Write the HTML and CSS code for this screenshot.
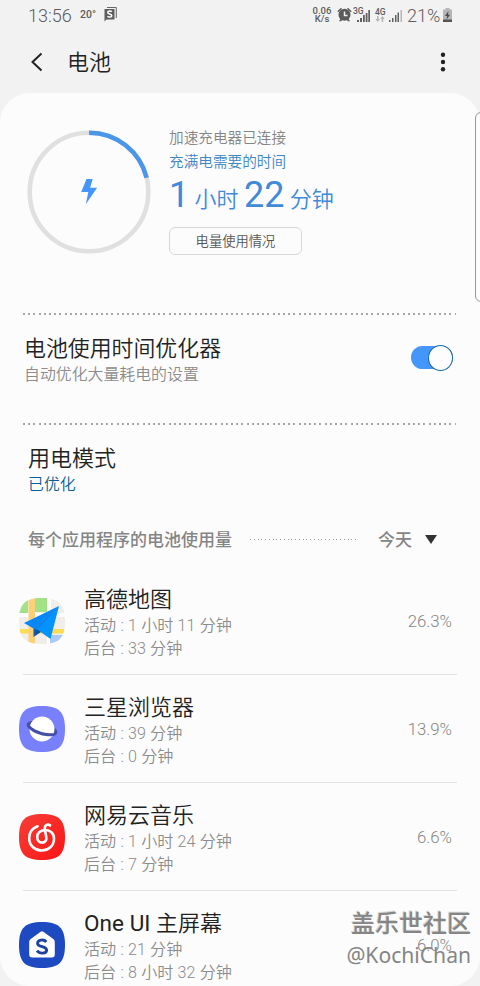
FILE: index.html
```
<!DOCTYPE html>
<html lang="zh-CN">
<head>
<meta charset="utf-8">
<title>电池</title>
<link rel="stylesheet" href="styles.css">
</head>
<body>
<div class="screen">
  <header class="status">
    <span class="clock">13:56</span>
    <span class="temp">20°</span>
    <svg class="note" width="13" height="15" viewBox="0 0 13 15"><path d="M3 .5h9.300V11" fill="none" stroke="#666"/><path d="M.5 2h10v10.500h-8L.5 14.500z" fill="#5e5e5e"/><path d="M7.800 4.700C6.500 3.500 3.700 4 3.700 5.500c0 1.800 4.100 1.200 4.100 3.200 0 1.600-3 1.900-4.400.5" fill="none" stroke="#fff" stroke-width="1.500"/></svg>
    <span class="speed"><span>0.06</span><span>K/s</span></span>
    <svg class="alarm" width="15" height="15" viewBox="0 0 15 15"><g fill="#5a5a5a"><circle cx="7.500" cy="7.800" r="6"/><path d="M.3 4.200 4 .8l1 1-3.700 3.500zM14.700 4.200 11 .8l-1 1 3.700 3.500zM2 14.200l1.500-2.500 2 1-1.500 1.500zM13 14.200l-1.500-2.500-2 1 1.500 1.500z"/></g><path d="M7.500 4.500v4h3" fill="none" stroke="#f2f2f2" stroke-width="1.500"/></svg>
    <span class="net net-a">3G</span>
    <svg class="bars bars-a" width="13" height="12" viewBox="0 0 13 12"><path d="M0 10h2v2H0zM3 8h2v4H3zM6 5h1.800v7H6zM8.700 3h1.800v9H8.700zM11.300 0H13v12h-1.700z" fill="#606060"/></svg>
    <span class="net net-b"><span>4G</span><svg width="10" height="6" viewBox="0 0 10 6"><path d="M2 0h1.500v3H5L2.700 6 .5 3H2zM6.700 6h1.500V3h1.500L7.500 0 5.200 3h1.500z" fill="#b5b5b5"/></svg></span>
    <svg class="bars" width="13" height="12" viewBox="0 0 13 12"><path d="M0 10h1.500v2H0zM3 8h1.500v4H3zM6 5h1.500v7H6zM8.500 2.500H10V12H8.500z" fill="#606060"/><path d="M11.500 0H13v12h-1.500z" fill="#b5b5b5"/></svg>
    <span class="percent">21%</span>
    <svg class="cell" width="9" height="14" viewBox="0 0 9 14"><path d="M2.500 0h4v1.500H9V14H0V1.500h2.500z" fill="#b5b5b5"/><path d="M0 11.500h9V14H0z" fill="#555"/><path d="M5.500 3 2 8h2.200L3.500 11.500 7 6.700H5z" fill="#4a4a4a"/></svg>
  </header>
  <nav class="bar">
    <svg class="back" width="12" height="20" viewBox="0 0 12 20"><path d="M10.500 1.500 1.500 10l9 8.500" fill="none" stroke="#222" stroke-width="2"/></svg>
    <h1 class="title">电池</h1>
    <svg class="more" width="6" height="20" viewBox="0 0 6 20"><g fill="#222"><circle cx="3" cy="2.800" r="2.200"/><circle cx="3" cy="10" r="2.200"/><circle cx="3" cy="17.200" r="2.200"/></g></svg>
  </nav>
  <main class="card">
    <section class="summary">
      <svg class="ring" width="124" height="124" viewBox="0 0 124 124"><circle cx="62" cy="62" r="59.300" fill="none" stroke="#e0e0e0" stroke-width="4.600"/><path d="M62 2.700A59.300 59.300 0 0 1 119.600 47.800" fill="none" stroke="#4a96e8" stroke-width="4.600"/><path d="M59.500 49h6.200l-2.600 8.700h7L58.800 74.300l2.500-12.200h-7.100z" fill="#4596fb"/></svg>
      <div class="charge">
        <p class="charger">加速充电器已连接</p>
        <p class="until">充满电需要的时间</p>
        <p class="remaining"><b>1</b> 小时 <b>22</b> 分钟</p>
        <button class="usage-button">电量使用情况</button>
      </div>
    </section>
    <div class="dots"></div>
    <section class="optimizer">
      <div><h2 class="heading">电池使用时间优化器</h2><p class="hint">自动优化大量耗电的设置</p></div>
      <span class="switch"><span class="knob"></span></span>
    </section>
    <div class="dots"></div>
    <section class="mode"><h2 class="heading">用电模式</h2><p class="hint hint-link">已优化</p></section>
    <div class="filter"><span class="filter-label">每个应用程序的电池使用量</span><span class="filter-dots"></span><span class="day">今天</span><svg class="caret" width="12" height="9" viewBox="0 0 12 9"><path d="M0 0h12L6 9z" fill="#333"/></svg></div>
    <ul class="apps">
      <li class="app">
        <svg class="icon" width="46" height="46" viewBox="0 0 46 46"><defs><clipPath id="tile"><path d="M23 0C40 0 46 6 46 23S40 46 23 46 0 40 0 23 6 0 23 0z"/></clipPath></defs><g clip-path="url(#tile)"><path d="M0 0h46v46H0z" fill="#f0eee9"/><path d="M0 0h9v15H0z" fill="#a1e286"/><path d="M15 0h13v14H15z" fill="#a1e286"/><path d="M28 0h4v46h-4zM0 15h46v4H0z" fill="#fff"/><path d="M0 31h46v4.500H0z" fill="#fddc55"/><path d="M9.500 0H16v46H9.500z" fill="#fdd078"/><path d="M31 37h15v9H31z" fill="#a9c9fb"/></g><path d="M40 8 5 25l9.500 5.500z" fill="#0787f5"/><path d="M40 8 14.500 30.500v8.500l4.500-7z" fill="#075cb0"/><path d="M40 8 18 31.500 31.500 41z" fill="#0594ff"/><path d="M40 8 14.500 30.500 18 32z" fill="#0787f5"/><path d="m14.500 39 7.500-5-3.500-2.500z" fill="#0a4f98"/></svg>
        <div class="info"><h3 class="name">高德地图</h3><p>活动 : 1 小时 11 分钟</p><p>后台 : 33 分钟</p></div><span class="share">26.3%</span>
      </li>
      <li class="app">
        <svg class="icon" width="46" height="46" viewBox="0 0 46 46"><path d="M23 0C40 0 46 6 46 23S40 46 23 46 0 40 0 23 6 0 23 0z" fill="#7880fb"/><ellipse cx="23" cy="22.500" rx="15.800" ry="6.800" transform="rotate(17 23 22.500)" fill="#4651a5"/><circle cx="23" cy="23" r="12.500" fill="#fff"/><path d="M8 18c-.3 4.500 6.500 9.200 14.500 11.200C31 31.300 38 30.500 38.200 26c-1.500 1.700-7.500 1.800-14.400.2C17 24.500 11 21 10.300 18z" fill="#4651a5"/></svg>
        <div class="info"><h3 class="name">三星浏览器</h3><p>活动 : 39 分钟</p><p>后台 : 0 分钟</p></div><span class="share">13.9%</span>
      </li>
      <li class="app">
        <svg class="icon" width="46" height="46" viewBox="0 0 46 46"><defs><linearGradient id="red" x1="0" y1="0" x2="1" y2="1"><stop stop-color="#f64038"/><stop offset="1" stop-color="#fb1414"/></linearGradient></defs><path d="M23 0C40 0 46 6 46 23S40 46 23 46 0 40 0 23 6 0 23 0z" fill="url(#red)"/><path d="M18.500 12.300C13 14.300 10.200 19 10.200 24.500c0 7.200 5.800 12 12.500 12s12.300-4.700 12.300-11.700c0-5.600-4.200-8.800-8.500-8.800-5 0-8.300 3-8.300 7 0 3.500 2.100 5.600 4.800 5.600 3.200 0 4.800-2.600 4.300-5.500l-1.500-7.300c-.6-4 2.300-6.600 5.300-4.400" fill="none" stroke="#fff" stroke-width="2.600" stroke-linecap="round"/></svg>
        <div class="info"><h3 class="name">网易云音乐</h3><p>活动 : 1 小时 24 分钟</p><p>后台 : 7 分钟</p></div><span class="share">6.6%</span>
      </li>
      <li class="app">
        <svg class="icon" width="46" height="46" viewBox="0 0 46 46"><path d="M23 0C40 0 46 6 46 23S40 46 23 46 0 40 0 23 6 0 23 0z" fill="#1d4ac0"/><path d="M21.700 9.700a2 2 0 0 1 2.600 0l10 7.300q1.500 1 1.500 3v12.500q0 3-3 3H13.200q-3 0-3-3V20q0-2 1.500-3z" fill="#fff"/><path d="M27.300 20C25 17 18.600 17.600 18.600 21.400c0 4 9 2.500 9 6.500 0 4-7 4.300-9.600.8" fill="none" stroke="#1c449f" stroke-width="2.900"/></svg>
        <div class="info"><h3 class="name"><span class="latin">One UI</span> 主屏幕</h3><p>活动 : 21 分钟</p><p>后台 : 8 小时 32 分钟</p></div><span class="share">6.0%</span>
      </li>
    </ul>
  </main>
  <div class="edge-handle"></div>
  <div class="watermark"><span class="community">盖乐世社区</span><span class="author">@KochiChan</span></div>
</div>
</body>
</html>
```
FILE: styles.css
```
* { box-sizing: border-box; }
body, h1, h2, h3, p, ul { margin: 0; padding: 0; font-weight: 350; }
body { background: #f2f2f2; font-family: Roboto, "Noto Sans CJK SC", sans-serif; color: #222; }
svg { display: block; flex: none; }
.screen { position: relative; width: 480px; height: 986px; overflow: hidden; }

.status { display: flex; height: 30px; align-items: center; padding: 0 27px 0 28px; color: #5c5c5c; white-space: nowrap; }
.clock { width: 43px; font-size: 18px; }
.temp { width: 18px; margin-left: 9px; padding-bottom: 2px; font-size: 10.5px; font-weight: 500; }
.note { margin: -1px 0 0 6px; }
.speed { display: flex; flex-direction: column; align-items: center; width: 20px; margin-left: auto; font-size: 9.5px; line-height: 8px; font-weight: 500; }
.alarm { margin: -1px 0 0 5px; }
.net { font-size: 8.5px; line-height: 8px; font-weight: 500; }
.net-a { width: 11px; height: 17px; margin-left: 1px; }
.net-b { width: 12px; margin-left: 5px; }
.bars { margin: 1px 0 0 2px; }
.bars-a { margin-left: -7px; }
.percent { width: 34px; margin-left: 5px; font-size: 18px; }
.cell { margin: -1px 1px 0 2px; }

.bar { display: flex; align-items: center; height: 63px; padding: 0 34px 0 31px; }
.title { margin: 2px 0 0 24px; font-size: 22px; line-height: 32px; }
.more { margin-left: auto; }

.card { height: 893px; border-radius: 30px; background: #fcfcfc; overflow: hidden; }
.summary { display: flex; height: 220px; padding: 37px 0 0 27px; }
.charge { margin-left: 18px; }
.charger, .until { height: 24px; line-height: 24px; font-size: 14.65px; white-space: nowrap; }
.charger { margin-top: -4px; color: #858585; }
.until { color: #3e85c4; }
.remaining { height: 43px; line-height: 43px; font-size: 22px; color: #408ad8; white-space: nowrap; }
.remaining b { font-size: 36px; font-weight: 400; }
.usage-button { width: 133px; height: 28px; margin-top: 10px; padding: 1px 0 0; border: 1.5px solid #d8d8d8; border-radius: 6px; background: #fcfcfc; color: #555; font: 350 13.3px/24px Roboto, "Noto Sans CJK SC", sans-serif; display: block; }

.dots { height: 2px; margin: 0 24px 0 23px; background: repeating-linear-gradient(90deg, #a8a8a8 0 2px, transparent 2px 5.2px); }
.optimizer { display: flex; justify-content: space-between; height: 108px; padding: 19px 27px 0 24px; }
.heading { height: 29px; font-size: 22px; line-height: 29px; }
.optimizer .heading { font-size: 21.9px; }
.hint { height: 24px; font-size: 15.9px; line-height: 24px; color: #8c8c8c; }
.hint-link { color: #0b5f98; }
.switch { display: flex; justify-content: flex-end; align-items: center; width: 42px; height: 23px; margin-top: 12px; border-radius: 12px; background: #4596fb; }
.knob { flex: none; width: 25px; height: 26px; border: 1px solid #19699e; border-radius: 50%; background: #fdfdfd; }
.mode { height: 97px; padding: 19px 28px 0; }
.filter { display: flex; align-items: center; height: 36px; padding: 0 42px 0 28px; color: #858585; font-size: 17px; line-height: 24px; font-weight: 500; }
.filter-dots { width: 107px; height: 1px; margin: -2px 0 0 18px; background: repeating-linear-gradient(90deg, #999 0 1px, transparent 1px 3.75px); }
.day { margin-left: 21px; }
.caret { margin: -2px 0 0 13px; }

.apps { list-style: none; padding: 0 23px; margin-top: 9px; }
.app { display: flex; align-items: flex-start; height: 108px; padding: 17px 5px 0 0; border-bottom: 1px solid #e2e2e2; }
.icon { margin: 14px 0 0 -4px; }
.info { margin-left: 19px; color: #8c8c8c; font-size: 16.1px; line-height: 23px; word-spacing: .3px; white-space: nowrap; }
.name { height: 30px; font-size: 22px; line-height: 31px; color: #222; }
.latin { font-size: 22.5px; font-weight: 400; }
.share { margin: 26px 0 0 auto; font-size: 16.8px; line-height: 23px; font-weight: 350; color: #858585; }

.edge-handle { position: absolute; top: 112px; right: -10px; width: 15px; height: 190px; border: 1px solid #999; border-radius: 6px; background: #fcfcfc; }
.watermark { position: absolute; right: 9px; bottom: 16px; display: flex; flex-direction: column; align-items: flex-end; color: #858585; white-space: nowrap; }
.community { font-size: 24px; line-height: 31px; font-weight: 500; text-shadow: -1px -1px 0 #d5d5d5; }
.author { font-family: "Noto Sans", sans-serif; font-size: 21.1px; line-height: 30px; font-weight: 400; }
```
